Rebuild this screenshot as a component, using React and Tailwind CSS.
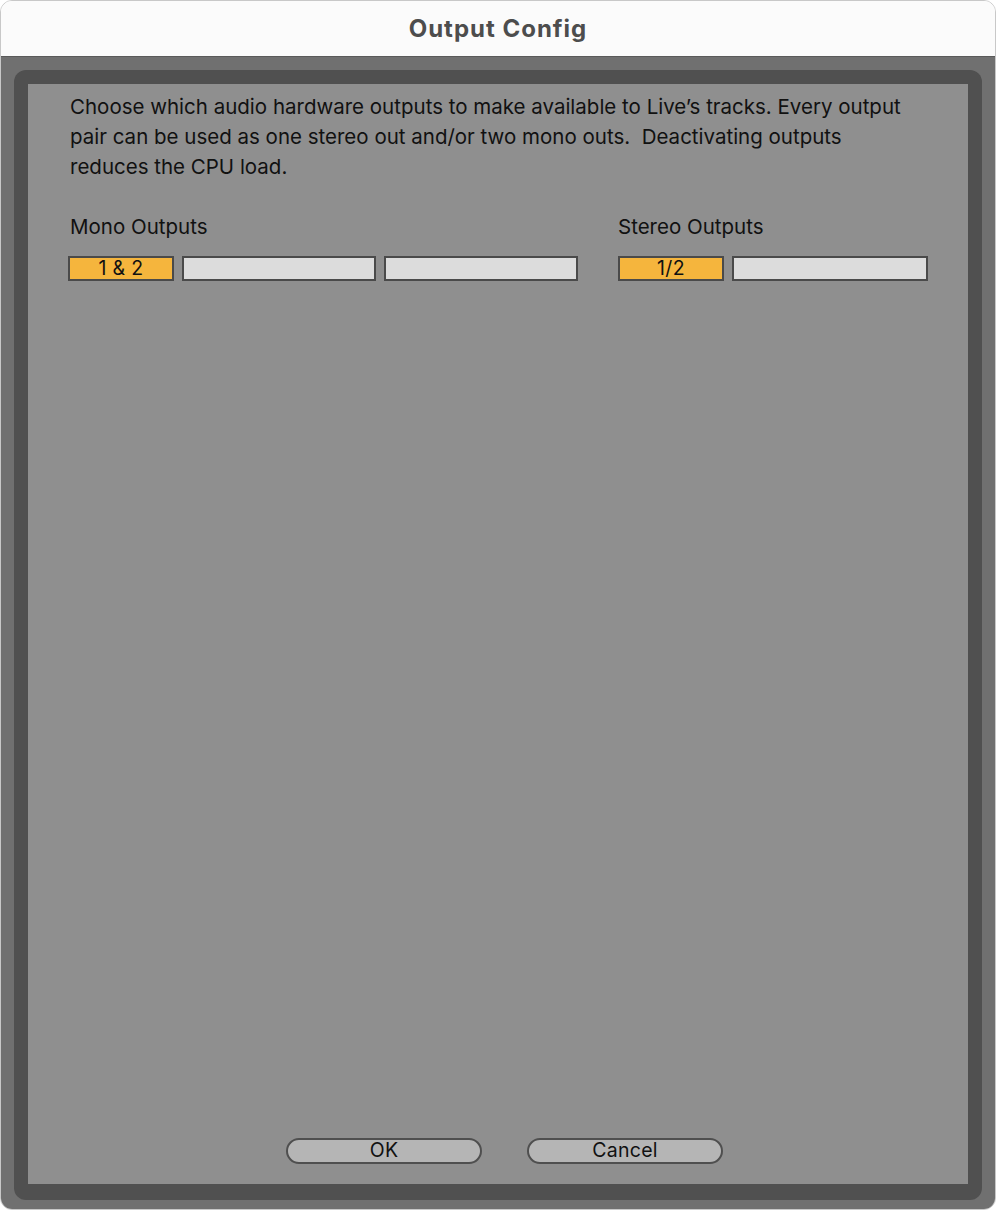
import React from "react";

function Box({ active, label, w }) {
  return (
    <div
      className={
        "h-[25px] border-2 border-[#4a4a4a] flex items-center justify-center text-[19.5px] leading-none text-[#111] tracking-[0.3px] " +
        (active ? "bg-[#f5b53d]" : "bg-[#dcdcdc]") +
        " " +
        w
      }
    >
      {label}
    </div>
  );
}

export default function App() {
  return (
    <div className="w-[996px] h-[1210px] bg-white">
      <div className="w-[996px] h-[1210px] rounded-[12px] overflow-hidden flex flex-col border border-[#c8c8c8]">
        <div
          className="h-[56px] shrink-0 bg-[#fbfbfb] border-b border-[#5a5a5a] flex items-center justify-center text-[24px] font-bold text-[#4d4d4d] tracking-[1px]"
          style={{ fontFamily: "Inter, 'Liberation Sans', sans-serif" }}
        >
          Output Config
        </div>
        <div className="flex-1 bg-[#707070] pt-[13px] pl-[13px] pr-[13px] pb-[9px] flex">
          <div className="flex-1 bg-[#505050] rounded-[12px] p-[14px] pb-[16px] flex">
            <div
              className="flex-1 bg-[#8f8f8f] flex flex-col pl-[42px] pt-[8px] pb-[20px] text-[#111]"
              style={{ fontFamily: "Inter, 'Noto Sans', sans-serif" }}
            >
              <p className="text-[20.5px] leading-[30px] whitespace-nowrap">
                Choose which audio hardware outputs to make available to Live’s tracks. Every output
                <br />
                pair can be used as one stereo out and/or two mono outs.&nbsp; Deactivating outputs
                <br />
                reduces the CPU load.
              </p>
              <div className="flex mt-[30px]">
                <div className="flex flex-col">
                  <div className="text-[20.5px] leading-[30px]">Mono Outputs</div>
                  <div className="flex gap-[8px] mt-[14px] -ml-[2px]">
                    <Box active label="1 & 2" w="w-[106px]" />
                    <Box w="w-[194px]" />
                    <Box w="w-[194px]" />
                  </div>
                </div>
                <div className="flex flex-col ml-[40px]">
                  <div className="text-[20.5px] leading-[30px]">Stereo Outputs</div>
                  <div className="flex gap-[8px] mt-[14px]">
                    <Box active label="1/2" w="w-[106px]" />
                    <Box w="w-[196px]" />
                  </div>
                </div>
              </div>
              <div className="flex-1" />
              <div className="flex gap-[45px] ml-[216px]">
                <button className="w-[196px] h-[26px] rounded-full border-2 border-[#4f4f4f] bg-[#b5b5b5] text-[19.5px] leading-none text-[#111] tracking-[0.3px]">
                  OK
                </button>
                <button className="w-[196px] h-[26px] rounded-full border-2 border-[#4f4f4f] bg-[#b5b5b5] text-[19.5px] leading-none text-[#111] tracking-[0.3px]">
                  Cancel
                </button>
              </div>
            </div>
          </div>
        </div>
      </div>
    </div>
  );
}
